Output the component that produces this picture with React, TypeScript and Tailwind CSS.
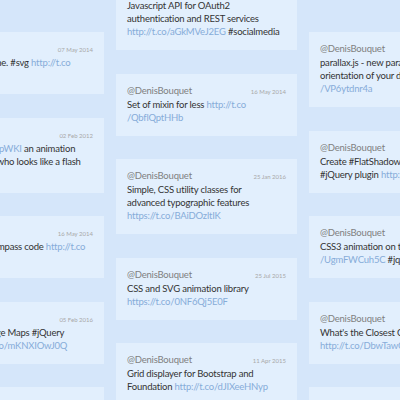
// стена твитов - masonry из трех колонок, края обрезаны
type Tweet = {
	date: string
	lines: string[]
}

const left: Tweet[] = [
	{ date: '07 May 2014', lines: ['Animate a fun line. #svg http://t.co', '/Yb3kq8PzLm'] },
	{ date: '02 Feb 2012', lines: ['http://t.co/HbvSpWKI an animation', 'Funny little guy who looks like a flash', '#css3'] },
	{ date: '16 May 2014', lines: ['Snippets of a compass code http://t.co', '/Xk2pL9oWqz'] },
	{ date: '05 Feb 2016', lines: ['Responsive Image Maps #jQuery', 'plugins http://t.co/mKNXIOwJ0Q'] },
	{ date: '02 Jan 2016', lines: ['Responsive tables http://t.co', '/Tq7RnW2bXc'] },
]

const middle: Tweet[] = [
	{ date: '04 Mar 2014', lines: ['Javascript API for OAuth2', 'authentication and REST services', 'http://t.co/aGkMVeJ2EG #socialmedia'] },
	{ date: '16 May 2014', lines: ['Set of mixin for less http://t.co', '/QbflQptHHb'] },
	{ date: '25 Jan 2016', lines: ['Simple, CSS utility classes for', 'advanced typographic features', 'https://t.co/BAiDOzltIK'] },
	{ date: '25 Jul 2015', lines: ['CSS and SVG animation library', 'https://t.co/0NF6Qj5E0F'] },
	{ date: '11 Apr 2015', lines: ['Grid displayer for Bootstrap and', 'Foundation http://t.co/dJIXeeHNyp'] },
]

const right: Tweet[] = [
	{ date: '21 Apr 2014', lines: ['parallax.js - new parallax engine for the', 'orientation of your device http://t.co', '/VP6ytdnr4a'] },
	{ date: '12 Mar 2014', lines: ['Create #FlatShadow effect with this', '#jQuery plugin http://t.co/Fs9wLq'] },
	{ date: '03 Jun 2014', lines: ['CSS3 animation on the canvas http://t.co', '/UgmFWCuh5C #jquery'] },
	{ date: '18 Feb 2015', lines: ['What\'s the Closest Color in the palette', 'http://t.co/DbwTawQx2K'] },
	{ date: '09 Oct 2015', lines: ['Pure CSS loaders http://t.co', '/Kp3sZ8vNwe'] },
]

const isLink = (w: string) => w.startsWith('http') || w.startsWith('/')

function Line({ text }: { text: string }) {
	return (
		<div className="whitespace-nowrap leading-[13px] h-[13px]">
			{text.split(' ').map((w, i) => (
				<span key={i} className={isLink(w) ? 'text-[#86acd9]' : ''}>
					{i > 0 ? ' ' : ''}
					{w}
				</span>
			))}
		</div>
	)
}

function Card({ t }: { t: Tweet }) {
	return (
		<div className="bg-[#e2effd] px-[11px] pt-[11px] pb-[12px] shrink-0">
			<div className="flex flex-row justify-between items-center h-[13px]">
				<span className="text-[#808080]">@DenisBouquet</span>
				<span className="text-[6px] tracking-normal text-[#a8a8a8]">{t.date}</span>
			</div>
			{t.lines.map((l, i) => (
				<Line key={i} text={l} />
			))}
		</div>
	)
}

function Column({ items, className }: { items: Tweet[]; className: string }) {
	return (
		<div className={'w-[181px] shrink-0 flex flex-col gap-[23.5px] ' + className}>
			{items.map((t, i) => (
				<Card key={i} t={t} />
			))}
		</div>
	)
}

export default function App() {
	return (
		<div
			className="w-[400px] h-[400px] overflow-hidden bg-[#d5e6fa] text-[9.5px] tracking-[-0.2px] text-[#333]"
			style={{ fontFamily: 'Lato, "Open Sans", sans-serif' }}
		>
			<div className="flex flex-row items-start gap-[12px] ml-[-77px]">
				<Column items={left} className="mt-[32px]" />
				<Column items={middle} className="mt-[-25px]" />
				<Column items={right} className="mt-[32px]" />
			</div>
		</div>
	)
}
